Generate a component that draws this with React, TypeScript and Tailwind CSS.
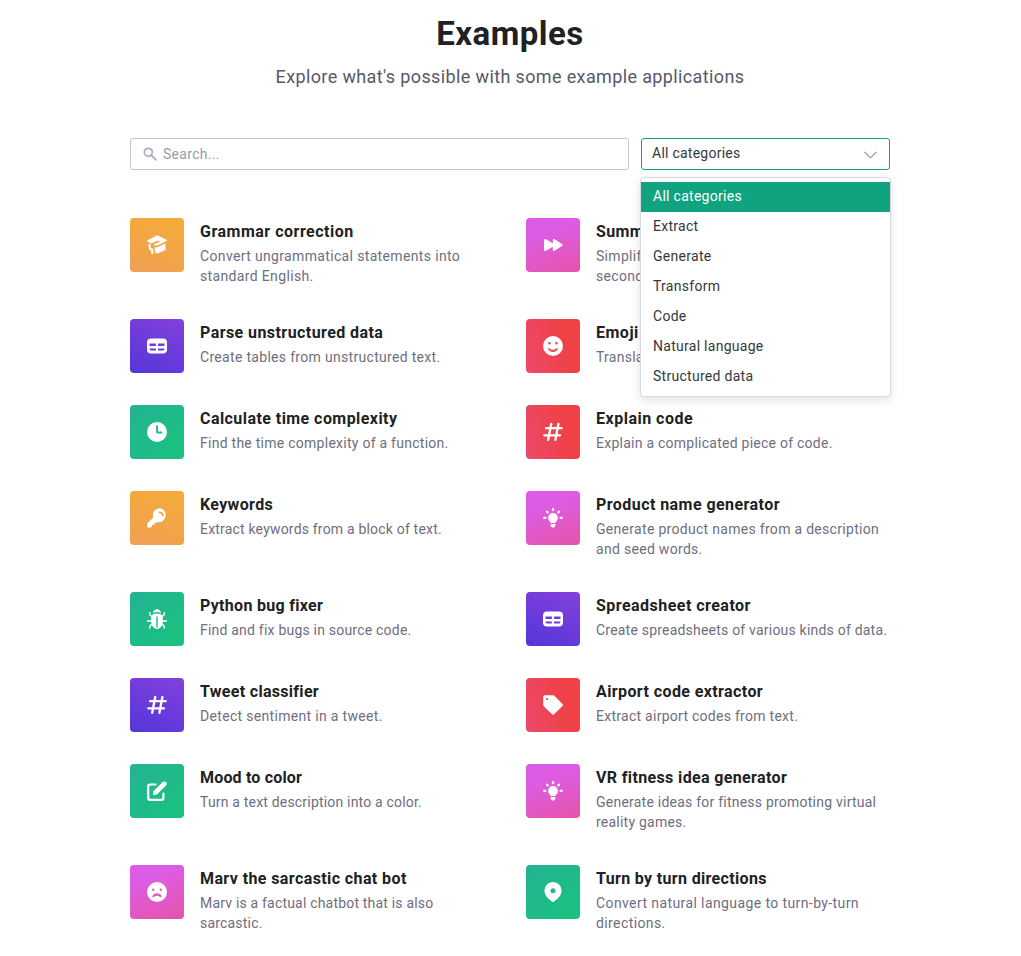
import React from "react";

type Item = { title: string; text: string; tone: Tone; icon: IconName; titleTrack: string; textTrack: string };
type Tone = "orange" | "pink" | "purple" | "red" | "green";
type IconName =
  | "cap" | "forward" | "table" | "smile" | "clock" | "hash" | "key"
  | "bulb" | "bug" | "tag" | "edit" | "sad" | "pin";

const tones: Record<Tone, string> = {
  orange: "bg-[linear-gradient(200deg,#f4ac36_0%,#ef9f55_100%)]",
  pink: "bg-[linear-gradient(160deg,#dd5ce5_25%,#e554aa_100%)]",
  purple: "bg-[linear-gradient(205deg,#8440dc_0%,#5436da_100%)]",
  red: "bg-[linear-gradient(75deg,#ec4a6b_0%,#ef4146_70%)]",
  green: "bg-[linear-gradient(135deg,#24b295_0%,#19c37d_100%)]",
};

const icons: Record<IconName, React.ReactNode> = {
  cap: (
    <>
      <path d="M9.500.4Q10 .1 10.500.4L19.600 4.700Q20.300 5.200 19.600 5.700L10.400 10.600 6.800 10.200 6.700 9.300 12.900 6.700 10.900 5.500 4.400 8.500.4 6.800Q-.3 6.300.4 5.600Z" />
      <path d="M7.500 12.300 10.400 12.200 18.500 8.200V14.300Q18.500 14.900 18 15.200L10.600 18.600 8 17.400Z" />
      <path d="M1.500 8.800 3.800 9.800 4 13.200 6.300 13.800V19.300L4 18.300V15.500L1.900 14.500Z" />
    </>
  ),
  forward: (
    <path d="M1 5.200C1 4 2 3.600 2.900 4.200L9.800 8.200V5.200C9.800 4 10.800 3.600 11.700 4.200L19.200 9.200Q20.100 10 19.200 10.800L11.700 15.800C10.800 16.400 9.800 16 9.800 14.800V11.800L2.900 15.800C2 16.400 1 16 1 14.800Z" />
  ),
  table: (
    <path
      fillRule="evenodd"
      d="M4 2.400H16A4 4 0 0 1 20 6.400V13.400A4 4 0 0 1 16 17.400H4A4 4 0 0 1 0 13.400V6.400A4 4 0 0 1 4 2.400ZM2.500 7.600V10H8.900V7.600ZM11.100 7.600V10H17.500V7.600ZM2.500 12.400Q2.500 14.600 4 14.600H8.900V12.400ZM11.100 12.400V14.600H16Q17.500 14.600 17.500 12.400Z"
    />
  ),
  smile: (
    <path
      fillRule="evenodd"
      d="M10 0A10 10 0 1 1 10 20A10 10 0 1 1 10 0ZM6.500 6A1.300 1.300 0 1 0 6.500 8.600A1.300 1.300 0 1 0 6.500 6ZM13.500 6A1.300 1.300 0 1 0 13.500 8.600A1.300 1.300 0 1 0 13.500 6ZM5.800 12Q5 12 5.300 13Q6.500 15.900 10 15.900T14.700 13Q15 12 14.200 12L13.300 12.500Q12 13.700 10 13.700T6.700 12.500Z"
    />
  ),
  sad: (
    <path
      fillRule="evenodd"
      d="M10 0A10 10 0 1 1 10 20A10 10 0 1 1 10 0ZM6.200 6.500A1.200 1.200 0 1 0 6.200 8.900A1.200 1.200 0 1 0 6.200 6.500ZM13.800 6.500A1.200 1.200 0 1 0 13.800 8.900A1.200 1.200 0 1 0 13.800 6.500ZM10 11.300Q6.500 11.300 5.300 14.200Q5 15.300 6 15.300L7.600 14.400Q10 12.900 12.400 14.400L14 15.300Q15 15.300 14.700 14.200Q13.500 11.300 10 11.300Z"
    />
  ),
  clock: (
    <path
      fillRule="evenodd"
      d="M10 0A10 10 0 1 1 10 20A10 10 0 1 1 10 0ZM10 3.300Q9.100 3.300 9.100 4.100V10.200Q9.100 11.500 10.300 11.500H14.500Q15.400 11.500 15.400 10.500T14.500 9.600H11V4.100Q11 3.300 10 3.300Z"
    />
  ),
  hash: (
    <path
      d="M8.200 2 5.200 17.800M15.400 2 12.400 17.800M3 6.200H18.700M1.200 13.300H17"
      fill="none"
      stroke="currentColor"
      strokeWidth="2.300"
      strokeLinecap="round"
    />
  ),
  key: (
    <path
      fillRule="evenodd"
      d="M13 .2A6.900 6.900 0 1 1 10.300 14L9.400 14.900H7.400V16.800H5.600L4 19.400H1Q.1 19.400.1 18.500V15.500L6.300 9.500A6.900 6.900 0 0 1 13 .2ZM12.300 3.500Q11.500 3.700 11.800 4.700 12.100 5.300 13 5.300 14.800 5.500 15 7.500 15.200 8.300 16 8.300 16.900 8.200 16.900 7.300 16.300 3.700 12.300 3.500Z"
    />
  ),
  bulb: (
    <>
      <path d="M10 4.900A4.900 4.900 0 0 1 12.900 13.700L12.400 15H7.600L7.100 13.700A4.900 4.900 0 0 1 10 4.900ZM7.500 16.100H12.500Q12.500 19.500 10 19.800 7.500 19.500 7.500 16.100Z" />
      <path
        d="M10 1.200V2.200M4.100 3.700 4.700 4.400M15.900 3.700 15.300 4.400M1.200 9.800H2.400M18.800 9.800H17.600"
        stroke="currentColor"
        strokeWidth="2.300"
        strokeLinecap="round"
      />
    </>
  ),
  bug: (
    <>
      <path d="M6 3.900Q6.700.3 10 .3T14 3.900Q10 2.300 6 3.900Z" />
      <path
        fillRule="evenodd"
        d="M6.300 4.900Q10 3.900 13.700 4.900 16 6.500 16 11.500 16 19.200 10 20 4 19.200 4 11.500 4 6.500 6.300 4.900ZM9.300 7.500V18.500H10.700V7.500Z"
      />
      <path
        d="M2.700 3.600 3.100 6.300 5.500 7.600M17.300 3.600 16.900 6.300 14.500 7.600M.6 12H5M19.400 12H15M2.600 19 3.200 16.500 5.500 15M17.400 19 16.800 16.500 14.500 15"
        fill="none"
        stroke="currentColor"
        strokeWidth="1.400"
        strokeLinecap="round"
      />
    </>
  ),
  tag: (
    <path
      fillRule="evenodd"
      d="M2 .2H10Q10.800.2 11.400.8L19.500 9Q20.300 10 19.500 11L11 19.300Q10 20 9 19.300L.8 11.200Q.2 10.500.2 9.800V2Q.2.2 2 .2ZM4 2.900Q2.900 2.900 2.900 4T4 5.100 5.100 4 4 2.900Z"
    />
  ),
  edit: (
    <>
      <path
        d="M8.500 3.500H3Q1.200 3.500 1.200 5.300V17Q1.200 18.800 3 18.800H14.600Q16.400 18.800 16.400 17V12.500"
        fill="none"
        stroke="currentColor"
        strokeWidth="2.200"
        strokeLinecap="round"
      />
      <path d="M15.700 1.100Q17.300-.3 19 1.100 20.500 2.800 19 4.500L9.900 13.600 6.100 14.200 6.400 10.200Z" />
    </>
  ),
  pin: (
    <path
      fillRule="evenodd"
      d="M10 .1A8.600 8.600 0 0 1 18.600 8.700C18.600 13.500 14 17.200 10.700 19.800Q10 20.300 9.300 19.800C6 17.200 1.400 13.500 1.400 8.700A8.600 8.600 0 0 1 10 .1ZM10 6.200A2.500 2.500 0 1 0 10 11.200A2.500 2.500 0 1 0 10 6.200Z"
    />
  ),
};

const rows: Item[][] = [
  [
    { title: "Grammar correction", text: "Convert ungrammatical statements into standard English.", tone: "orange", icon: "cap", titleTrack: "tracking-[0.5px]", textTrack: "tracking-[0.35px]" },
    { title: "Summarize for a 2nd grader", text: "Simplify text to a level appropriate for a second-grade student.", tone: "pink", icon: "forward", titleTrack: "tracking-[0.4px]", textTrack: "tracking-[0.3px]" },
  ],
  [
    { title: "Parse unstructured data", text: "Create tables from unstructured text.", tone: "purple", icon: "table", titleTrack: "tracking-[0.43px]", textTrack: "tracking-[0.31px]" },
    { title: "Emoji Translation", text: "Translate regular text into emoji text.", tone: "red", icon: "smile", titleTrack: "tracking-[0.5px]", textTrack: "tracking-[0.25px]" },
  ],
  [
    { title: "Calculate time complexity", text: "Find the time complexity of a function.", tone: "green", icon: "clock", titleTrack: "tracking-[0.44px]", textTrack: "tracking-[0.26px]" },
    { title: "Explain code", text: "Explain a complicated piece of code.", tone: "red", icon: "hash", titleTrack: "tracking-[0.5px]", textTrack: "tracking-[0.25px]" },
  ],
  [
    { title: "Keywords", text: "Extract keywords from a block of text.", tone: "orange", icon: "key", titleTrack: "tracking-[0.35px]", textTrack: "tracking-[0.19px]" },
    { title: "Product name generator", text: "Generate product names from a description and seed words.", tone: "pink", icon: "bulb", titleTrack: "tracking-[0.44px]", textTrack: "tracking-[0.3px]" },
  ],
  [
    { title: "Python bug fixer", text: "Find and fix bugs in source code.", tone: "green", icon: "bug", titleTrack: "tracking-[0.3px]", textTrack: "tracking-[0.21px]" },
    { title: "Spreadsheet creator", text: "Create spreadsheets of various kinds of data.", tone: "purple", icon: "table", titleTrack: "tracking-[0.47px]", textTrack: "tracking-[0.21px]" },
  ],
  [
    { title: "Tweet classifier", text: "Detect sentiment in a tweet.", tone: "purple", icon: "hash", titleTrack: "tracking-[0.3px]", textTrack: "tracking-[0.32px]" },
    { title: "Airport code extractor", text: "Extract airport codes from text.", tone: "red", icon: "tag", titleTrack: "tracking-[0.4px]", textTrack: "tracking-[0.27px]" },
  ],
  [
    { title: "Mood to color", text: "Turn a text description into a color.", tone: "green", icon: "edit", titleTrack: "tracking-[0.18px]", textTrack: "tracking-[0.19px]" },
    { title: "VR fitness idea generator", text: "Generate ideas for fitness promoting virtual reality games.", tone: "pink", icon: "bulb", titleTrack: "tracking-[0.36px]", textTrack: "tracking-[0.23px]" },
  ],
  [
    { title: "Marv the sarcastic chat bot", text: "Marv is a factual chatbot that is also sarcastic.", tone: "pink", icon: "sad", titleTrack: "tracking-[0.4px]", textTrack: "tracking-[0.19px]" },
    { title: "Turn by turn directions", text: "Convert natural language to turn-by-turn directions.", tone: "green", icon: "pin", titleTrack: "tracking-[0.34px]", textTrack: "tracking-[0.4px]" },
  ],
];

const categories = ["All categories", "Extract", "Generate", "Transform", "Code", "Natural language", "Structured data"];

function Card({ item }: { item: Item }) {
  return (
    <a className="flex items-start gap-4">
      <span className={`flex size-[54px] shrink-0 items-center justify-center rounded-[4px] text-white ${tones[item.tone]}`}>
        <svg className="size-5" viewBox="0 0 20 20" fill="currentColor">{icons[item.icon]}</svg>
      </span>
      <span className="flex min-w-0 flex-col pt-[2px] pb-[1px]">
        <span className={`whitespace-nowrap text-[16px] leading-6 font-bold text-[#202123] ${item.titleTrack}`}>{item.title}</span>
        <span className={`mt-[2px] text-[14px] leading-5 text-[#6e6e80] ${item.textTrack}`}>{item.text}</span>
      </span>
    </a>
  );
}

export default function App() {
  return (
    <main className="h-[956px] overflow-hidden bg-white font-['Roboto',sans-serif]">
      <div className="ml-[130px] w-[760px]">
        <header className="flex flex-col items-center pt-[14px]">
          <h1 className="text-[33px] leading-10 font-bold tracking-[0.5px] text-[#202123]">Examples</h1>
          <p className="mt-[9px] text-[18px] leading-7 tracking-[0.37px] whitespace-nowrap text-[#565869]">
            Explore what's possible with some example applications
          </p>
        </header>
        <div className="mt-[47px] flex gap-3">
          <label className="flex h-8 w-[499px] items-center rounded-[3px] border border-[#c5c5d2] pl-3">
            <svg className="size-[14px] text-[#acacbe]" viewBox="0 0 14 14" fill="none" stroke="currentColor">
              <circle cx="5.300" cy="5.300" r="4" strokeWidth="1.700" />
              <path d="m8.400 8.400 4.500 4.500" strokeWidth="1.800" strokeLinecap="round" />
            </svg>
            <span className="ml-[6px] text-[14px] leading-5 tracking-[0.3px] text-[#9a9aab]">Search...</span>
          </label>
          <div className="relative w-[249px]">
            <button className="flex h-8 w-full items-center justify-between rounded-[3px] border border-[#10a37f] pr-[12px] pb-[2px] pl-[10px]">
              <span className="text-[14px] leading-5 tracking-[0.25px] text-[#353740]">All categories</span>
              <svg className="mt-[3px] h-[8px] w-[13px] text-[#8e8ea0]" viewBox="0 0 13 8" fill="none" stroke="currentColor">
                <path d="m.5.8 6 6 6-6" strokeWidth="1.100" />
              </svg>
            </button>
            <ul className="absolute top-[39px] -left-px z-10 w-[251px] rounded-[4px] border border-[#d9d9e3] bg-white pt-1 pb-1 shadow-[0_3px_9px_rgba(0,0,0,0.12)]">
              {categories.map((name, i) => (
                <li
                  key={name}
                  className={`h-[30px] pl-3 text-[14px] leading-[29px] tracking-[0.28px] ${i === 0 ? "bg-[#10a37f] text-white" : "text-[#353740]"}`}
                >
                  {name}
                </li>
              ))}
            </ul>
          </div>
        </div>
        <section className="mt-12 flex flex-col gap-8">
          {rows.map((row) => (
            <div key={row[0].title} className="grid grid-cols-[364px_364px] gap-8">
              {row.map((item) => <Card key={item.title} item={item} />)}
            </div>
          ))}
        </section>
      </div>
    </main>
  );
}
